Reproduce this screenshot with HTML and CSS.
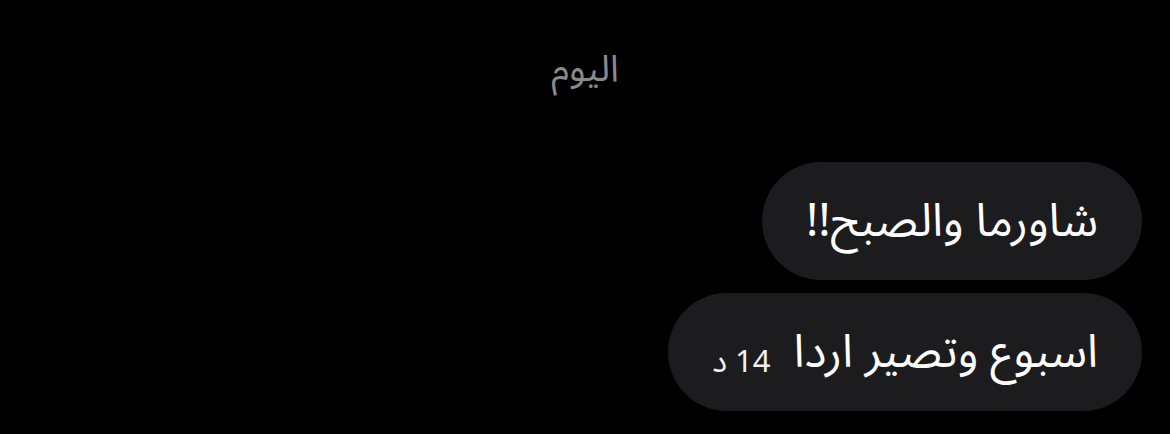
FILE: index.html
```html
<!DOCTYPE html>
<html lang="ar" dir="rtl">
<head>
<meta charset="utf-8">
<meta name="viewport" content="width=device-width, initial-scale=1">
<title>المحادثة</title>
<link rel="stylesheet" href="styles.css">
</head>
<body>
<div class="chat">
  <div class="day">اليوم</div>
  <div class="messages">
    <div class="bubble">شاورما والصبح!!</div>
    <div class="bubble">
      <span class="text">اسبوع وتصير اردا</span>
      <span class="time">14 د</span>
    </div>
  </div>
</div>
</body>
</html>
```

FILE: styles.css
```css
html, body {
  margin: 0;
  background: #000;
}

body {
  font-family: "Noto Sans Arabic", "DejaVu Sans", sans-serif;
  color: #fff;
}

.chat {
  width: 1170px;
  height: 434px;
  overflow: hidden;
}

.day {
  text-align: center;
  color: #8a8a8a;
  font-size: 37px;
  line-height: 50px;
  padding-top: 44px;
  height: 118px;
  box-sizing: border-box;
}

.messages {
  display: flex;
  flex-direction: column;
  align-items: flex-start;
  gap: 13px;
  padding-top: 44px;
  padding-right: 28px;
}

.bubble {
  display: flex;
  align-items: center;
  gap: 23px;
  height: 118px;
  padding: 0 44px;
  border-radius: 59px;
  background: #1c1c1e;
  font-size: 46px;
  white-space: nowrap;
}

.time {
  font-size: 31px;
  color: #f0f0f0;
  padding-top: 20px;
}
```
